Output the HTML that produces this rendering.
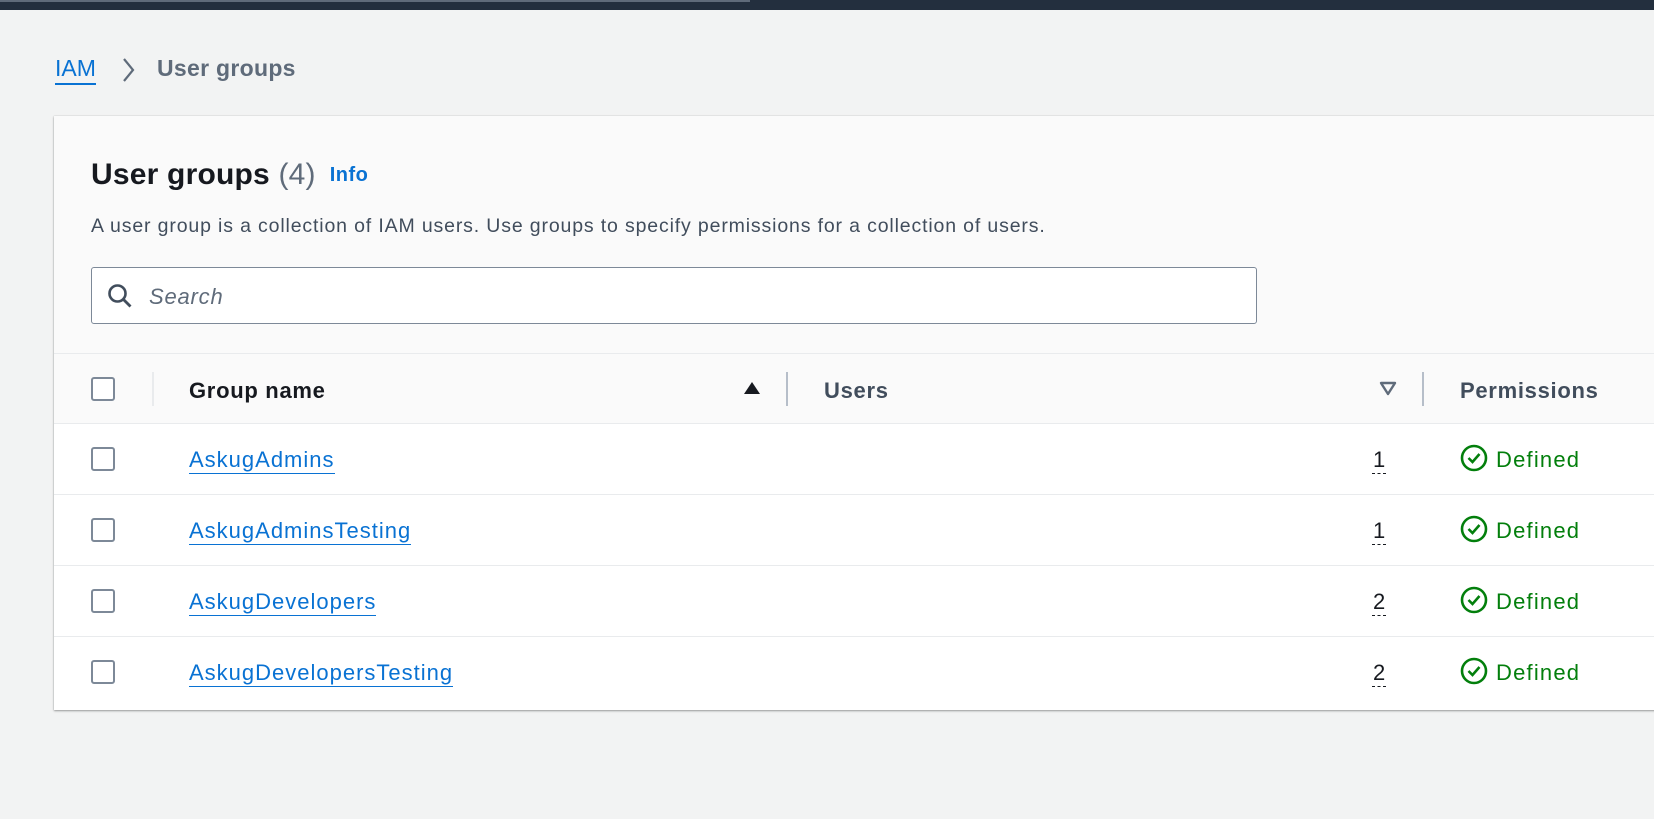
<!DOCTYPE html>
<html><head><meta charset="utf-8"><style>
*{box-sizing:border-box;margin:0;padding:0}
body{width:1654px;height:819px;overflow:hidden;background:#f2f3f3;font-family:"Liberation Sans",sans-serif;position:relative;color:#16191f}
.top{position:absolute;left:0;top:0;width:1654px;height:10px;background:#232f3e}
.top2{position:absolute;left:0;top:0;width:750px;height:2px;background:#5f6b7a}
.bc{position:absolute;top:55px;left:55px;font-size:23px;}
.bc a{color:#0972d3;text-decoration:none;border-bottom:2px solid #0972d3;padding-bottom:2px}
.bc .cur{position:absolute;left:102px;top:0;color:#5f6b7a;font-weight:bold;white-space:nowrap;letter-spacing:0.3px}
.card{position:absolute;left:54px;top:116px;width:1620px;height:594px;background:#fff;box-shadow:0 1px 2px rgba(0,0,0,.35),0 0 1px rgba(0,0,0,.2)}
.hd{position:absolute;left:0;top:0;width:100%;height:238px;background:#fafafa;border-bottom:1px solid #e9ebed}
h1{position:absolute;left:37px;top:42px;font-size:30px;font-weight:bold;white-space:nowrap;letter-spacing:0.2px}
h1 .c{font-weight:normal;color:#5f6b7a}
h1 .i{font-size:20px;color:#0972d3;margin-left:14px;vertical-align:3px;letter-spacing:0.5px}
.desc{position:absolute;left:37px;top:99px;font-size:19.5px;color:#414d5c;white-space:nowrap;letter-spacing:0.85px}
.search{position:absolute;left:37px;top:151px;width:1166px;height:57px;border:1px solid #7d8998;border-radius:3px;background:#fff}
.search span{position:absolute;left:57px;top:16px;font-size:22px;font-style:italic;color:#5f6b7a;letter-spacing:0.8px}
.th{position:absolute;left:0;top:238px;width:100%;height:70px;background:#fafafa;border-bottom:1px solid #e9ebed}
.cb{position:absolute;width:24px;height:24px;border:2px solid #7d8998;border-radius:3px;background:#fff}
.col{position:absolute;font-size:22px;font-weight:bold;white-space:nowrap;letter-spacing:0.7px}
.vd{position:absolute;width:2px;height:34px;background:#b6bec9}
.row{position:absolute;left:0;width:100%;height:71px;border-bottom:1px solid #e9ebed}
.row a{position:absolute;left:135px;top:23px;font-size:22px;color:#0972d3;text-decoration:none;border-bottom:1.5px solid #0972d3;line-height:26px;letter-spacing:1px}
.n{position:absolute;left:1318px;top:23px;font-size:22px;border-bottom:1.5px dashed #16191f;line-height:26px;padding:0 1px}
.def{position:absolute;left:1406px;top:23px;font-size:22px;color:#037f0c;white-space:nowrap;line-height:26px;letter-spacing:1.2px}
.def svg{position:absolute;left:0;top:-3px}
.def span{margin-left:36px}
</style></head><body>
<div class="top"></div><div class="top2"></div>
<div class="bc"><a>IAM</a>
<svg style="position:absolute;left:65px;top:2px" width="18" height="26" viewBox="0 0 18 26"><path d="M4 2l9 11-9 11" fill="none" stroke="#5f6b7a" stroke-width="2.2"/></svg>
<span class="cur">User groups</span></div>
<div class="card">
<div class="hd">
<h1>User groups <span class="c">(4)</span><span class="i">Info</span></h1>
<div class="desc">A user group is a collection of IAM users. Use groups to specify permissions for a collection of users.</div>
<div class="search"><svg style="position:absolute;left:15px;top:15px" width="26" height="26" viewBox="0 0 26 26"><circle cx="10.5" cy="10.5" r="8" fill="none" stroke="#414d5c" stroke-width="2.6"/><path d="M16.5 16.5l7 7" stroke="#414d5c" stroke-width="2.8"/></svg><span>Search</span></div>
</div>
<div class="th">
<div class="cb" style="left:37px;top:23px"></div>
<div class="vd" style="left:98px;top:18px;background:#e9ebed"></div>
<div class="col" style="left:135px;top:24px">Group name</div>
<svg style="position:absolute;left:689px;top:26px" width="18" height="16"><path d="M9 2L17 14H1z" fill="#16191f"/></svg>
<div class="vd" style="left:732px;top:18px"></div>
<div class="col" style="left:770px;top:24px;color:#414d5c">Users</div>
<svg style="position:absolute;left:1325px;top:27px" width="18" height="16"><path d="M2 2h14L9 13z" fill="none" stroke="#5f6b7a" stroke-width="2.4" stroke-linejoin="round"/></svg>
<div class="vd" style="left:1368px;top:18px"></div>
<div class="col" style="left:1406px;top:24px;color:#414d5c">Permissions</div>
</div>
<div class="row" style="top:308px"><div class="cb" style="left:37px;top:23px"></div><a>AskugAdmins</a><span class="n">1</span><div class="def"><svg width="28" height="28" viewBox="0 0 28 28"><circle cx="14" cy="14" r="12" fill="none" stroke="#037f0c" stroke-width="2.6"/><path d="M8.5 14l4 4 7-8" fill="none" stroke="#037f0c" stroke-width="2.6"/></svg><span>Defined</span></div></div>
<div class="row" style="top:379px"><div class="cb" style="left:37px;top:23px"></div><a>AskugAdminsTesting</a><span class="n">1</span><div class="def"><svg width="28" height="28" viewBox="0 0 28 28"><circle cx="14" cy="14" r="12" fill="none" stroke="#037f0c" stroke-width="2.6"/><path d="M8.5 14l4 4 7-8" fill="none" stroke="#037f0c" stroke-width="2.6"/></svg><span>Defined</span></div></div>
<div class="row" style="top:450px"><div class="cb" style="left:37px;top:23px"></div><a>AskugDevelopers</a><span class="n">2</span><div class="def"><svg width="28" height="28" viewBox="0 0 28 28"><circle cx="14" cy="14" r="12" fill="none" stroke="#037f0c" stroke-width="2.6"/><path d="M8.5 14l4 4 7-8" fill="none" stroke="#037f0c" stroke-width="2.6"/></svg><span>Defined</span></div></div>
<div class="row" style="top:521px;border-bottom:none"><div class="cb" style="left:37px;top:23px"></div><a>AskugDevelopersTesting</a><span class="n">2</span><div class="def"><svg width="28" height="28" viewBox="0 0 28 28"><circle cx="14" cy="14" r="12" fill="none" stroke="#037f0c" stroke-width="2.6"/><path d="M8.5 14l4 4 7-8" fill="none" stroke="#037f0c" stroke-width="2.6"/></svg><span>Defined</span></div></div>
</div>
</body></html>
